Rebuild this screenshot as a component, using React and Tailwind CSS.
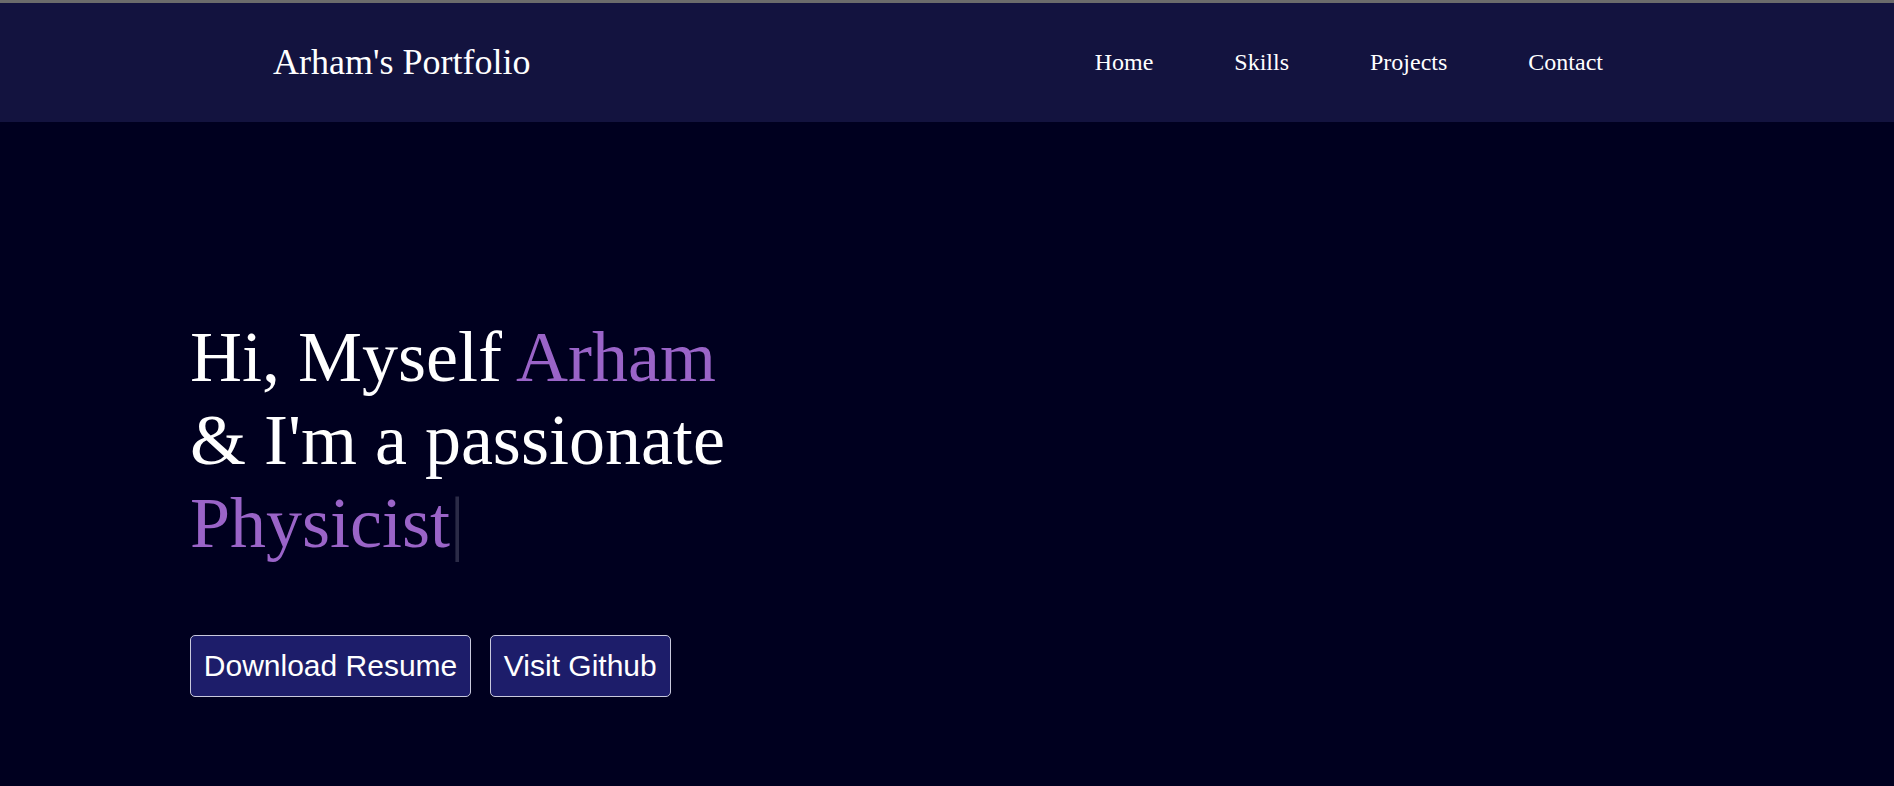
export default function App() {
  const serif = { fontFamily: '"Liberation Serif", "Times New Roman", serif' };

  return (
    <div className="min-h-screen bg-[#00001f] text-white border-t-[3px] border-[#6b6b6b]" style={serif}>
      <header className="h-[119px] bg-[#13133f] flex items-center justify-between pl-[273px] pr-[291px] pb-[2px]">
        <div className="text-[36px] leading-none">Arham's Portfolio</div>
        <nav className="flex items-center gap-[81px] text-[24px]">
          <a href="#home">Home</a>
          <a href="#skills">Skills</a>
          <a href="#projects">Projects</a>
          <a href="#contact">Contact</a>
        </nav>
      </header>

      <section className="pl-[190px] pt-[194px]">
        <h1 className="text-[72px] leading-[1.15] font-normal">
          Hi, Myself <span className="text-[#9a64c8]">Arham</span>
          <br />
          &amp; I'm a passionate
          <br />
          <span className="text-[#9a64c8]">Physicist</span>
          <span className="text-[#2b2b47]">|</span>
        </h1>

        <div className="flex gap-[19px] mt-[71px] font-['Liberation_Sans',Arial,sans-serif] text-[30px]">
          <button className="bg-[#1d1d6a] border border-[#c9c9dd] rounded-[5px] px-[12.8px] py-[12.8px] leading-[normal]">
            Download Resume
          </button>
          <button className="bg-[#1d1d6a] border border-[#c9c9dd] rounded-[5px] px-[12.8px] py-[12.8px] leading-[normal]">
            Visit Github
          </button>
        </div>
      </section>
    </div>
  );
}
